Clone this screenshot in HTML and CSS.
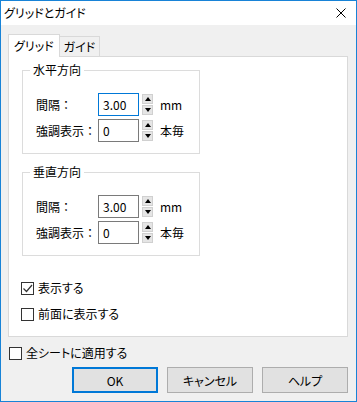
FILE: index.html
```html
<!DOCTYPE html>
<html lang="ja">
<head>
  <meta charset="UTF-8" />
  <title>グリッドとガイド</title>
  <link rel="stylesheet" href="styles.css">
</head>
<body>
  <div class="window">
    <div class="titlebar">
      <span class="title">グリッドとガイド</span>
      <svg class="close" width="10" height="10" viewBox="0 0 10 10">
        <path d="M0.5 0.5 L9.5 9.5 M9.5 0.5 L0.5 9.5" stroke="#000" stroke-width="1" fill="none"/>
      </svg>
    </div>

    <div class="content">
      <div class="tabs">
        <div class="tab active">グリッド</div>
        <div class="tab">ガイド</div>
      </div>

      <div class="panel">
        <fieldset class="group">
          <legend>水平方向</legend>
          <div class="row">
            <span class="label">間隔：</span>
            <div class="field focused">3.00</div>
            <div class="spin"><span class="up"></span><span class="down"></span></div>
            <span class="unit">mm</span>
          </div>
          <div class="row">
            <span class="label">強調表示：</span>
            <div class="field">0</div>
            <div class="spin"><span class="up"></span><span class="down"></span></div>
            <span class="unit">本毎</span>
          </div>
        </fieldset>

        <fieldset class="group second">
          <legend>垂直方向</legend>
          <div class="row">
            <span class="label">間隔：</span>
            <div class="field">3.00</div>
            <div class="spin"><span class="up"></span><span class="down"></span></div>
            <span class="unit">mm</span>
          </div>
          <div class="row">
            <span class="label">強調表示：</span>
            <div class="field">0</div>
            <div class="spin"><span class="up"></span><span class="down"></span></div>
            <span class="unit">本毎</span>
          </div>
        </fieldset>

        <div class="checks">
          <label class="check">
            <span class="box">
              <svg width="11" height="11" viewBox="0 0 11 11"><path d="M1.5 5.5 L4.5 8.5 L10 2" stroke="#333" stroke-width="1.2" fill="none"/></svg>
            </span>
            表示する
          </label>
          <label class="check"><span class="box"></span>前面に表示する</label>
        </div>
      </div>

      <label class="check all"><span class="box"></span>全シートに適用する</label>

      <div class="buttons">
        <button class="btn default">OK</button>
        <button class="btn">キャンセル</button>
        <button class="btn">ヘルプ</button>
      </div>
    </div>
  </div>
</body>
</html>
```

FILE: styles.css
```css
html, body {
  margin: 0;
  padding: 0;
}

body {
  font-family: "Noto Sans CJK JP", "Noto Sans", sans-serif;
  font-size: 12px;
  font-feature-settings: "palt";
  color: #000;
  background: #f0f0f0;
}

.window {
  width: 357px;
  height: 402px;
  box-sizing: border-box;
  border: 1px solid #1883d7;
  background: #f0f0f0;
  display: flex;
  flex-direction: column;
}

.titlebar {
  height: 24px;
  background: #fff;
  display: flex;
  align-items: center;
  justify-content: space-between;
  padding: 0 10px 0 3px;
}

.title {
  line-height: 16px;
}

.close {
  display: block;
  margin-top: -1px;
}

.content {
  flex: 1;
  padding: 9px 8px 0 7px;
  display: flex;
  flex-direction: column;
}

.tabs {
  display: flex;
  align-items: flex-end;
  height: 22px;
}

.tab {
  box-sizing: border-box;
  border: 1px solid #d9d9d9;
  border-bottom: none;
  height: 20px;
  line-height: 19px;
  padding: 0 4px;
  background: #f0f0f0;
  margin-left: -1px;
  white-space: nowrap;
}

.tab.active {
  position: relative;
  z-index: 1;
  height: 23px;
  margin-bottom: -1px;
  margin-left: 0;
  padding: 0 5px;
  line-height: 22px;
  background: #fff;
}

.panel {
  box-sizing: border-box;
  height: 281px;
  border: 1px solid #d9d9d9;
  background: #fff;
  padding: 5px 0 0 13px;
}

.group {
  width: 178px;
  box-sizing: border-box;
  margin: 0;
  border: 1px solid #dcdcdc;
  padding: 15px 0 11px 13px;
  min-inline-size: 0;
}

.group.second {
  margin-top: 10px;
}

.group legend {
  padding: 0 3px;
  margin-left: -6px;
  line-height: 16px;
}

.row {
  display: flex;
  align-items: center;
  height: 23px;
}

.row + .row {
  margin-top: 3px;
}

.label {
  width: 62px;
  font-feature-settings: normal;
  white-space: nowrap;
}

.field {
  box-sizing: border-box;
  width: 41px;
  height: 23px;
  border: 1px solid #7a7a7a;
  padding: 0 4px;
  line-height: 21px;
  background: #fff;
}

.field.focused {
  border-color: #0078d7;
}

.spin {
  display: flex;
  flex-direction: column;
  gap: 1px;
  margin-left: 3px;
  width: 11px;
  height: 21px;
}

.spin span {
  flex: 1;
  background: #e5e5e5;
  border: 1px solid #d0d0d0;
  display: flex;
  align-items: center;
  justify-content: center;
}

.spin .up::before,
.spin .down::before {
  content: "";
  border-left: 3px solid transparent;
  border-right: 3px solid transparent;
}

.spin .up::before {
  border-bottom: 4px solid #000;
}

.spin .down::before {
  border-top: 4px solid #000;
}

.unit {
  margin-left: 7px;
}

.checks {
  margin-top: 24px;
  margin-left: -1px;
  display: flex;
  flex-direction: column;
  gap: 10px;
}

.check {
  display: flex;
  align-items: center;
  height: 16px;
  line-height: 16px;
}

.box {
  box-sizing: border-box;
  width: 13px;
  height: 13px;
  border: 1px solid #333;
  background: #fff;
  margin-right: 4px;
  display: flex;
  align-items: center;
  justify-content: center;
}

.box svg {
  display: block;
}

.check.all {
  margin-top: 8px;
  margin-left: 1px;
}

.buttons {
  display: flex;
  justify-content: flex-end;
  gap: 9px;
  margin-top: 6px;
  margin-right: 0;
}

.btn {
  box-sizing: border-box;
  width: 86px;
  height: 26px;
  font: inherit;
  font-feature-settings: "palt";
  color: #000;
  background: #e1e1e1;
  border: 1px solid #adadad;
  padding: 0;
}

.btn.default {
  border: 2px solid #0078d7;
}
```
